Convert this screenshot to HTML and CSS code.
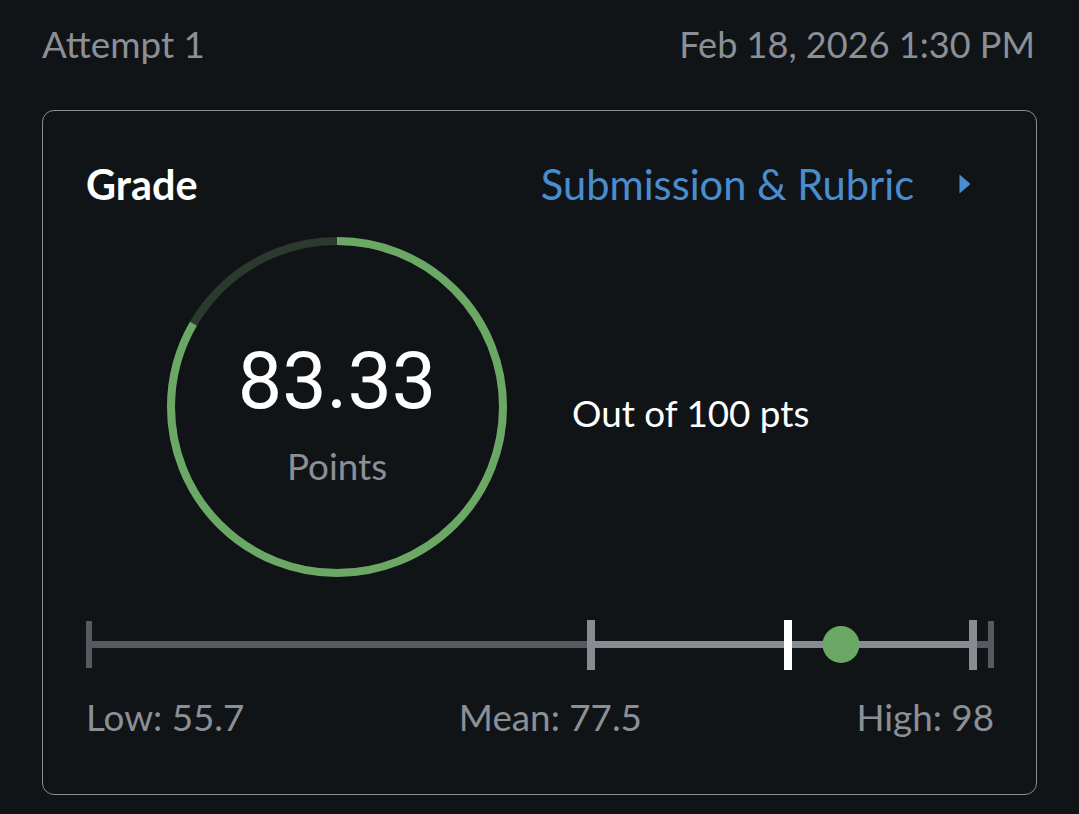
FILE: index.html
```html
<!DOCTYPE html>
<html lang="en">
<head>
<meta charset="utf-8">
<title>Grade</title>
<link rel="stylesheet" href="styles.css">
</head>
<body>
<div class="page">
  <div class="attempt-row">
    <span class="attempt">Attempt 1</span>
    <span class="date">Feb 18, 2026 1:30 PM</span>
  </div>
  <section class="card">
    <div class="card-head">
      <h2 class="title">Grade</h2>
      <a class="link" href="#">
        <span>Submission &amp; Rubric</span>
        <svg class="chev" width="12" height="20" viewBox="0 0 12 20"><path d="M0.5 0.5 L11.5 10 L0.5 19.5 Z" fill="#4a8dcf"/></svg>
      </a>
    </div>
    <div class="score-row">
      <div class="ring">
        <svg class="ring-svg" width="340" height="340" viewBox="0 0 340 340">
          <circle cx="170" cy="170" r="166" fill="none" stroke="#2a3a2c" stroke-width="8"/>
          <circle cx="170" cy="170" r="166" fill="none" stroke="#6ba865" stroke-width="8"
            stroke-dasharray="869.15 1043" transform="rotate(-90 170 170)"/>
        </svg>
        <div class="ring-text">
          <div class="score">83.33</div>
          <div class="points">Points</div>
        </div>
      </div>
      <div class="outof">Out of 100 pts</div>
    </div>
    <div class="scale">
      <div class="track">
        <div class="bar-base"></div>
        <div class="bar-range" style="left:55.7%; width:42.3%"></div>
        <div class="tick tick-dark" style="left:0%"></div>
        <div class="tick tick-light" style="left:55.7%"></div>
        <div class="tick tick-white" style="left:77.5%"></div>
        <div class="tick tick-light" style="left:98%"></div>
        <div class="tick tick-dark" style="left:100%"></div>
        <div class="dot" style="left:83.33%"></div>
      </div>
    </div>
    <div class="stats">
      <span>Low: 55.7</span>
      <span>Mean: 77.5</span>
      <span>High: 98</span>
    </div>
  </section>
</div>
</body>
</html>
```

FILE: styles.css
```css
html, body {
  margin: 0;
  padding: 0;
  background: #111417;
}
body {
  font-family: "Lato", "Noto Sans", sans-serif;
  color: #ffffff;
}
.page {
  padding: 20px 42px 0 42px;
}
.attempt-row {
  display: flex;
  justify-content: space-between;
  align-items: baseline;
  font-size: 36.8px;
  line-height: 48px;
  color: #8b9097;
  padding-right: 2px;
}
.date {
  font-size: 36.1px;
}
.card {
  margin-top: 42px;
  border: 1px solid #8a8f95;
  border-radius: 12px;
  padding: 39px 42px 55px 43px;
}
.card-head {
  display: flex;
  justify-content: space-between;
  align-items: center;
  height: 68px;
}
.title {
  margin: 0;
  font-size: 41.4px;
  font-weight: 700;
  line-height: normal;
  color: #ffffff;
}
.link {
  display: flex;
  align-items: center;
  gap: 45px;
  margin-right: 23px;
  font-size: 41.6px;
  line-height: normal;
  color: #4a8dcf;
  text-decoration: none;
}
.chev {
  display: block;
}
.score-row {
  display: flex;
  align-items: center;
  padding-left: 81px;
  gap: 65px;
  margin-top: 19px;
}
.ring {
  position: relative;
  width: 340px;
  height: 340px;
}
.ring-svg {
  display: block;
}
.ring-text {
  position: absolute;
  inset: 0;
  display: flex;
  flex-direction: column;
  align-items: center;
  padding-top: 99px;
}
.score {
  font-family: "Roboto", sans-serif;
  font-size: 79px;
  line-height: 90px;
  color: #ffffff;
}
.points {
  font-size: 36.8px;
  line-height: 44px;
  color: #8b9097;
  margin-top: 18px;
}
.outof {
  font-size: 36.8px;
  line-height: normal;
  color: #ffffff;
  margin-top: 11px;
}
.scale {
  margin-top: 43px;
  padding: 0 3px;
}
.track {
  position: relative;
  height: 50px;
}
.bar-base {
  position: absolute;
  left: 0;
  right: 0;
  top: 21px;
  height: 7px;
  background: #555a61;
}
.bar-range {
  position: absolute;
  top: 21px;
  height: 7px;
  background: #878c93;
}
.tick {
  position: absolute;
  top: 0;
  height: 50px;
  width: 8px;
  transform: translateX(-50%);
}
.tick-dark {
  background: #555a61;
  width: 6px;
  top: 1px;
  height: 47px;
}
.tick-light {
  background: #878c93;
}
.tick-white {
  background: #ffffff;
}
.dot {
  position: absolute;
  top: 6px;
  width: 37px;
  height: 37px;
  border-radius: 50%;
  background: #6ba865;
  transform: translateX(-50%);
}
.stats {
  display: flex;
  justify-content: space-between;
  margin-top: 25px;
  font-size: 36.8px;
  line-height: normal;
  color: #8b9097;
}
```
